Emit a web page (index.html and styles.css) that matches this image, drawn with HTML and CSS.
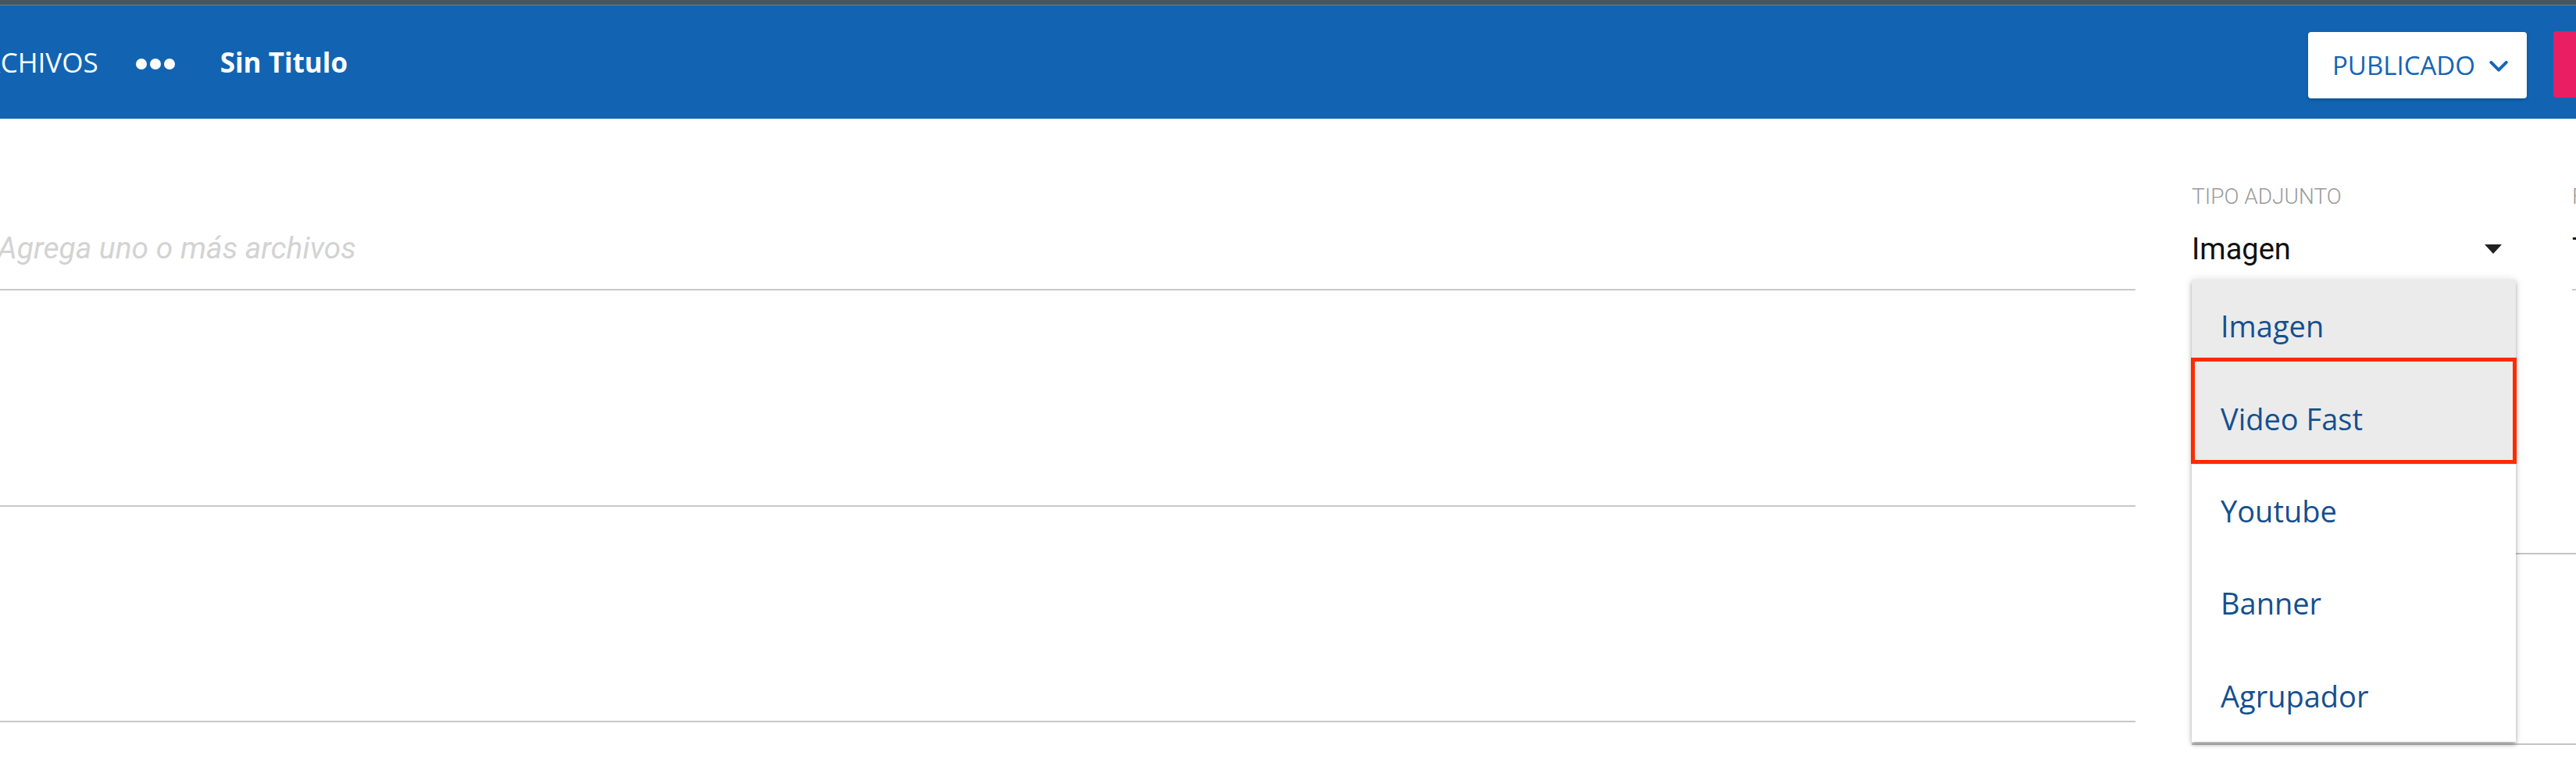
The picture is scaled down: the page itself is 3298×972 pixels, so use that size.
FILE: index.html
```html
<!DOCTYPE html>
<html lang="es">
<head>
<meta charset="utf-8">
<title>Sin Titulo</title>
<link rel="stylesheet" href="styles.css">
</head>
<body>
<div class="topstrip"></div>
<header class="appbar">
  <nav class="crumbs">
    <span class="crumb">ARCHIVOS</span>
    <span class="more"><i></i><i></i><i></i></span>
    <span class="title">Sin Titulo</span>
  </nav>
  <div class="actions">
    <button class="status">PUBLICADO
      <svg class="chev" width="26" height="16" viewBox="0 0 26 16"><polyline points="2.5,2.5 13,13 23.5,2.5" fill="none" stroke="#1565b5" stroke-width="4.2" stroke-linecap="round" stroke-linejoin="round"/></svg>
    </button>
    <button class="save">GUARDAR</button>
  </div>
</header>
<main class="content">
  <section class="files">
    <div class="field field-upload"><span class="placeholder">Agrega uno o más archivos</span></div>
    <div class="field field-2"></div>
    <div class="field field-3"></div>
  </section>
  <aside class="props">
    <div class="props-top">
      <div class="select select-type">
        <label class="select-label">TIPO ADJUNTO</label>
        <div class="select-value"><span>Imagen</span>
          <svg class="arrow" width="22" height="12" viewBox="0 0 22 12"><polygon points="0,0 22,0 11,12" fill="#222"/></svg>
        </div>
        <ul class="menu">
          <li class="menu-item is-selected">Imagen</li>
          <li class="menu-item is-hover">Video Fast</li>
          <li class="menu-item">Youtube</li>
          <li class="menu-item">Banner</li>
          <li class="menu-item">Agrupador</li>
        </ul>
        <div class="annotation"></div>
      </div>
      <div class="select select-next">
        <label class="select-label">FORMATO</label>
        <div class="select-value"><span>Todos</span></div>
      </div>
    </div>
    <div class="prop-row row-2"></div>
    <div class="prop-row row-3"></div>
  </aside>
</main>
</body>
</html>
```
FILE: styles.css
```css
html, body {
  margin: 0;
  padding: 0;
  width: 3298px;
  height: 972px;
  overflow: hidden;
  background: #ffffff;
}

body {
  font-family: "Open Sans", "Liberation Sans", sans-serif;
}

.topstrip {
  height: 6px;
  background: #47555f;
  border-bottom: 1px solid #718089;
}

.appbar {
  display: flex;
  align-items: center;
  height: 145px;
  background: #1264b2;
  color: #ffffff;
}

.crumbs {
  display: flex;
  align-items: center;
  margin-left: -43px;
  font-size: 35px;
  line-height: 48px;
}

.crumb {
  font-weight: 400;
  white-space: nowrap;
}

.more {
  display: flex;
  gap: 4px;
  margin-left: 48px;
  margin-top: 5px;
}

.more i {
  display: block;
  width: 14px;
  height: 14px;
  border-radius: 50%;
  background: #ffffff;
}

.title {
  margin-left: 58px;
  font-weight: 700;
  white-space: nowrap;
}

.actions {
  display: flex;
  align-items: flex-start;
  align-self: flex-start;
  margin-left: auto;
  margin-right: -171px;
  gap: 34px;
}

.status {
  display: flex;
  align-items: center;
  box-sizing: border-box;
  width: 280px;
  height: 85px;
  margin-top: 34px;
  padding: 0 24px 0 31px;
  border: none;
  border-radius: 4px;
  background: #ffffff;
  box-shadow: 0 2px 4px rgba(0, 0, 0, 0.2);
  font-family: "Open Sans", "Liberation Sans", sans-serif;
  font-size: 33px;
  color: #1565b5;
  letter-spacing: 0;
}

.chev {
  margin-left: 18px;
  margin-top: 2px;
}

.save {
  box-sizing: border-box;
  width: 200px;
  height: 85px;
  margin-top: 33px;
  padding: 0 0 0 32px;
  border: none;
  border-radius: 4px;
  background: #e91e63;
  color: #ffffff;
  font-family: "Open Sans", "Liberation Sans", sans-serif;
  font-size: 33px;
  text-align: left;
}

.content {
  display: flex;
  align-items: flex-start;
}

.files {
  flex: none;
  width: 2734px;
}

.field {
  border-bottom: 2px solid #c8c8c8;
}

.field-upload {
  display: flex;
  align-items: flex-end;
  box-sizing: border-box;
  height: 220px;
  padding-bottom: 28px;
}

.placeholder {
  margin-left: -3px;
  font-family: Roboto, "Liberation Sans", sans-serif;
  font-style: italic;
  font-size: 39px;
  line-height: 48px;
  color: #d3d3d3;
}

.field-2 {
  height: 275px;
}

.field-3 {
  height: 274px;
}

.props {
  flex: none;
  width: 900px;
  margin-left: 72px;
}

.props-top {
  display: flex;
  gap: 72px;
}

.select {
  position: relative;
  box-sizing: border-box;
  padding-top: 84px;
  height: 220px;
  border-bottom: 2px solid #c8c8c8;
  font-family: Roboto, "Liberation Sans", sans-serif;
}

.select-type {
  width: 415px;
}

.select-next {
  width: 300px;
}

.select-label {
  display: block;
  font-size: 28px;
  font-weight: 300;
  line-height: 32px;
  color: #9a9a9a;
  white-space: nowrap;
}

.select-value {
  display: flex;
  align-items: center;
  justify-content: space-between;
  margin-top: 27px;
  padding-right: 18px;
  font-size: 38px;
  line-height: 48px;
  color: #111111;
}

.arrow {
  display: block;
}

.menu {
  position: absolute;
  top: 206px;
  left: 0;
  z-index: 2;
  display: flex;
  flex-direction: column;
  box-sizing: border-box;
  width: 415px;
  height: 592px;
  margin: 0;
  padding: 0;
  list-style: none;
  background: #ffffff;
  box-shadow: 0 4px 5px rgba(0, 0, 0, 0.28), 0 0 10px rgba(0, 0, 0, 0.12);
}

.menu-item {
  flex: 1;
  display: flex;
  align-items: center;
  padding-left: 37px;
  font-family: "Open Sans", "Liberation Sans", sans-serif;
  font-size: 38px;
  color: #15508f;
}

.menu-item.is-selected,
.menu-item.is-hover {
  background: #ebebeb;
}

.annotation {
  position: absolute;
  top: 306px;
  left: -1px;
  z-index: 3;
  box-sizing: border-box;
  width: 417px;
  height: 136px;
  border: 5px solid #ff2a00;
  pointer-events: none;
}

.prop-row {
  border-bottom: 2px solid #c4c4c4;
}

.row-2 {
  height: 336px;
}

.row-3 {
  height: 242px;
}
```
